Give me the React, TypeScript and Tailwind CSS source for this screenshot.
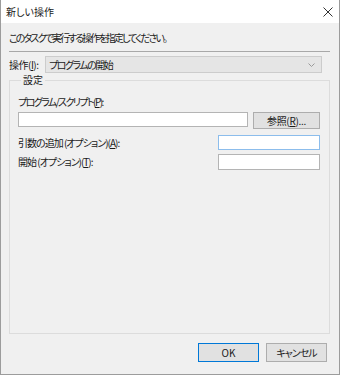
import React from "react";

function CloseIcon() {
    return (
        <svg width="10" height="10" viewBox="0 0 10 10" fill="none">
            <path d="M0.5 0.5 L9.5 9.5 M9.5 0.5 L0.5 9.5" stroke="#333" strokeWidth="1" />
        </svg>
    );
}

function Chevron() {
    return (
        <svg width="7" height="4" viewBox="0 0 7 4" fill="none">
            <path d="M0.5 0.5 L3.5 3.5 L6.5 0.5" stroke="#9a9a9a" strokeWidth="1" />
        </svg>
    );
}

function Key({ k }: { k: string }) {
    return <u className="underline-offset-1">{k}</u>;
}

export default function App() {
    return (
        <div className="flex h-[375px] w-[340px] flex-col border-x border-b border-[#9c9c9c] bg-[#f0f0f0] font-['Noto_Sans_CJK_JP','Noto_Sans',sans-serif] text-[10px] leading-[14px] text-[#1a1a1a] [font-feature-settings:'palt']">
            {/* Title bar */}
            <div className="flex h-[23px] shrink-0 items-center justify-between bg-white pl-[5px] pr-[6px]">
                <span>新しい操作</span>
                <CloseIcon />
            </div>

            <div className="flex flex-1 flex-col pl-[8px] pr-[9px]">
                <div className="mt-[8px] tracking-[-1.9px]">このタスクで実行する操作を指定してください。</div>
                <div className="mt-[6px] h-px bg-[#a8a8a8]" />

                {/* Action */}
                <div className="mt-[4px] flex h-[17px] items-center">
                    <span className="w-[36px] shrink-0 tracking-[-0.5px]">
                        操作(<Key k="I" />):
                    </span>
                    <div className="mr-[8px] flex h-[17px] flex-1 items-center justify-between border border-[#cccccc] bg-[#e5e5e5] pl-[3px] pr-[6px]">
                        <span className="tracking-[-1.5px]">プログラムの開始</span>
                        <Chevron />
                    </div>
                </div>

                {/* Settings */}
                <fieldset className="flex-1 border border-[#dcdcdc] pl-[8px] pr-[9px]">
                    <legend className="ml-[3px] px-[2px]">設定</legend>
                    <div className="mt-[8px] tracking-[-1.6px]">
                        プログラム/スクリプト(<Key k="P" />):
                    </div>
                    <div className="mt-[3px] flex items-start gap-[5px]">
                        <div className="h-[15px] flex-1 border border-[#b4b4b4] bg-white" />
                        <button
                            type="button"
                            className="h-[17px] w-[67px] border border-[#adadad] bg-[#e1e1e1] text-[10px] leading-[14px] tracking-[-0.3px]"
                        >
                            参照(<Key k="R" />)...
                        </button>
                    </div>
                    <div className="mt-[6px] flex items-center justify-between">
                        <span className="tracking-[-1px]">
                            引数の追加 (オプション)(<Key k="A" />):
                        </span>
                        <div className="h-[15px] w-[102px] border border-[#8cbdec] bg-white" />
                    </div>
                    <div className="mt-[4px] flex items-center justify-between">
                        <span className="tracking-[-1px]">
                            開始 (オプション)(<Key k="T" />):
                        </span>
                        <div className="h-[16px] w-[102px] border border-[#b4b4b4] bg-white" />
                    </div>
                </fieldset>

                {/* Buttons */}
                <div className="mb-[12px] mt-[9px] flex justify-end gap-[7px] pr-[3px]">
                    <button
                        type="button"
                        className="h-[19px] w-[61px] border border-[#0078d7] bg-[#e1e1e1] text-[10px] leading-[14px]"
                    >
                        OK
                    </button>
                    <button
                        type="button"
                        className="h-[19px] w-[61px] border border-[#adadad] bg-[#e1e1e1] text-[10px] leading-[14px] tracking-[-1px]"
                    >
                        キャンセル
                    </button>
                </div>
            </div>
        </div>
    );
}
